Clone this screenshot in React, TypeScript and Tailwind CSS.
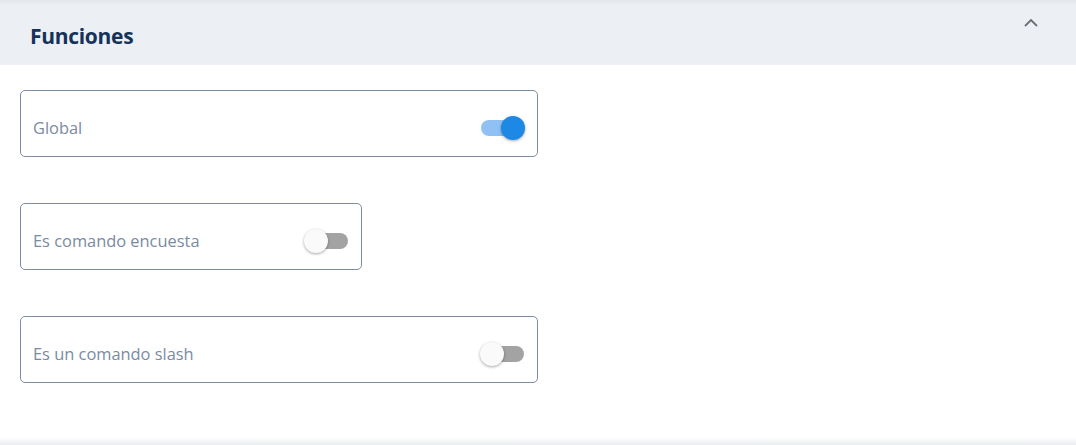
import React, { useState } from "react";

type Row = { label: string; on: boolean; width: string };

const rows: Row[] = [
  { label: "Global", on: true, width: "w-[518px]" },
  { label: "Es comando encuesta", on: false, width: "w-[342px]" },
  { label: "Es un comando slash", on: false, width: "w-[518px]" },
];

const Toggle = ({ on, onChange }: { on: boolean; onChange: () => void }) => (
  <button
    type="button"
    onClick={onChange}
    className="relative w-[45px] h-[24px] flex items-center shrink-0"
  >
    <span
      className={
        on
          ? "absolute left-[1px] right-[1px] h-[16px] rounded-full bg-[#90c1f5]"
          : "absolute left-[1px] right-[1px] h-[16px] rounded-full bg-[#a3a3a3]"
      }
    />
    <span
      className={
        on
          ? "absolute left-[21px] w-[24px] h-[24px] rounded-full bg-[#1e88e5] shadow-[0_1px_3px_rgba(0,0,0,0.35)]"
          : "absolute left-0 w-[24px] h-[24px] rounded-full bg-[#fafafa] shadow-[0_1px_3px_rgba(0,0,0,0.35)]"
      }
    />
  </button>
);

export default function App() {
  const [state, setState] = useState(rows.map((r) => r.on));

  return (
    <div
      className="w-[1076px] h-[445px] bg-white flex flex-col overflow-hidden"
      style={{ fontFamily: "'Open Sans', 'Liberation Sans', sans-serif" }}
    >
      {/* top shadow */}
      <div className="h-[5px] bg-gradient-to-b from-[#e2e5e9] to-[#eceff3]" />

      {/* header */}
      <div className="h-[60px] bg-[#eceff3] flex items-start justify-between pl-[30px] pr-[38px]">
        <h2 className="mt-[18px] text-[21px] leading-[26px] font-bold text-[#14325a] tracking-[-0.3px]">
          Funciones
        </h2>
        <svg width="14" height="9" viewBox="0 0 14 9" className="mt-[13px]">
          <path d="M1 8 L7 2 L13 8" fill="none" stroke="#6b6f75" strokeWidth="1.8" />
        </svg>
      </div>

      {/* body */}
      <div className="flex-1 flex flex-col gap-[46px] pt-[25px] px-[20px]">
        {rows.map((r, i) => (
          <div
            key={r.label}
            className={`${r.width} h-[67px] border border-[#7d8ea4] rounded-[5px] flex items-center justify-between pl-[12px] pr-[12px] pt-[9px]`}
          >
            <span className="text-[16.4px] text-[#7a8ba1]">{r.label}</span>
            <Toggle
              on={state[i]}
              onChange={() => setState((s) => s.map((v, j) => (j === i ? !v : v)))}
            />
          </div>
        ))}
      </div>

      {/* bottom shadow */}
      <div className="h-[8px] bg-gradient-to-b from-white to-[#eaedf1]" />
    </div>
  );
}
